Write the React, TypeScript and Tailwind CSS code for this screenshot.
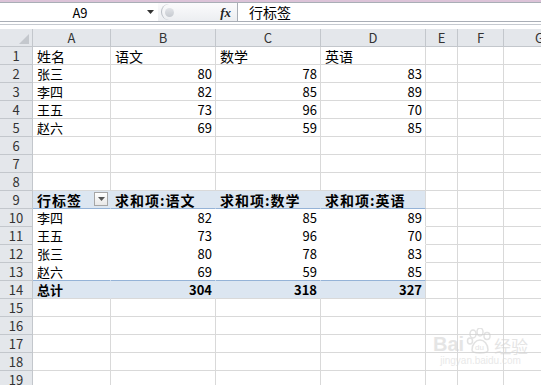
import React from "react";

type Val = string | number | null;

const COLS = ["A", "B", "C", "D", "E", "F", "G"];

const ROWS: Val[][] = [
  ["姓名", "语文", "数学", "英语"],
  ["张三", 80, 78, 83],
  ["李四", 82, 85, 89],
  ["王五", 73, 96, 70],
  ["赵六", 69, 59, 85],
  [],
  [],
  [],
  ["行标签", "求和项:语文", "求和项:数学", "求和项:英语"],
  ["李四", 82, 85, 89],
  ["王五", 73, 96, 70],
  ["张三", 80, 78, 83],
  ["赵六", 69, 59, 85],
  ["总计", 304, 318, 327],
  [],
  [],
  [],
  [],
  [],
];

const FONT = "font-['Noto_Sans_CJK_SC','Liberation_Sans',sans-serif]";

const DropButton = () => (
  <span className="absolute right-[2px] top-[1px] flex h-[14px] w-[14px] items-center justify-center border border-[#a6a6a6] bg-gradient-to-b from-white to-[#e8e8e8]">
    <svg width="7" height="4" viewBox="0 0 7 4">
      <path d="M0 0h7L3.5 4z" fill="#555" />
    </svg>
  </span>
);

const App = () => {
  return (
    <div className={`relative w-[541px] h-[385px] overflow-hidden bg-white text-[13px] text-black ${FONT}`}>
      {/* ribbon edge */}
      <div className="h-[2px] bg-[#dcc3d8]" />

      {/* formula bar */}
      <div className="flex h-[20px] border-y border-[#a9aeb6] bg-white">
        <div className="relative flex w-[158px] items-center justify-center">
          <span className="pl-[2px] text-[13px] leading-none">A9</span>
          <svg className="absolute right-[4px] top-[7px]" width="7" height="4" viewBox="0 0 7 4">
            <path d="M0 0h7L3.5 4z" fill="#333" />
          </svg>
        </div>
        <div className="flex w-[80px] items-center border-r border-[#a9aeb6] bg-gradient-to-b from-[#fbfbfc] to-[#eceef1]">
          <span className="ml-[3px] h-[16px] w-[14px] rounded-l-full border-l border-[#b8bdc4]" />
          <span className="-ml-[10px] h-[9px] w-[9px] rounded-full bg-gradient-to-b from-[#e2e4e8] to-[#c6cad0]" />
          <span className="ml-auto mr-[6px] font-['Liberation_Serif',serif] text-[13px] font-bold italic leading-none text-[#222]">
            fx
          </span>
        </div>
        <div className="flex items-center pl-[11px] text-[14px] leading-none">行标签</div>
      </div>

      {/* gap under formula bar */}
      <div className="h-[5px] bg-white">
        <div className="mt-[2px] h-px bg-[#c6cad0]" />
      </div>

      {/* sheet */}
      <div className="grid grid-cols-[33px_78px_105px_105px_105px_32px_46px_72px] auto-rows-[18px]">
        <div className="relative border-r border-b border-[#c3c7cc] bg-[#e4e7eb]">
          <svg className="absolute bottom-[2px] right-[3px]" width="10" height="10" viewBox="0 0 10 10">
            <path d="M10 0v10H0z" fill="#c4c8cd" />
          </svg>
        </div>
        {COLS.map((c) => (
          <div
            key={c}
            className="flex items-center justify-center border-r border-b border-[#c3c7cc] bg-[#e4e7eb] text-[13px] text-[#333]"
          >
            {c}
          </div>
        ))}

        {ROWS.map((row, i) => {
          const r = i + 1;
          const pivotHead = r === 9;
          const pivotBody = r >= 10 && r <= 13;
          const pivotTotal = r === 14;
          return (
            <React.Fragment key={r}>
              <div className="flex items-center justify-center border-r border-b border-[#c3c7cc] bg-[#e4e7eb] text-[13px] text-[#333]">
                {r}
              </div>
              {COLS.map((c, ci) => {
                const v = ci < 4 ? row[ci] ?? null : null;
                const inPivot = ci < 4 && (pivotHead || pivotBody || pivotTotal);
                const isNum = typeof v === "number";
                let cls = "border-r border-b border-[#d9d9d9]";
                if (inPivot) {
                  const right = ci === 3 ? "border-r-[#d9d9d9]" : pivotBody ? "border-r-white" : "border-r-[#dce6f1]";
                  const bottom =
                    pivotHead || r === 13 ? "border-b-[#95b3d7]" : pivotBody ? "border-b-white" : "border-b-[#d9d9d9]";
                  const bg = pivotHead || pivotTotal ? "bg-[#dce6f1]" : "bg-white";
                  cls = `border-r border-b ${right} ${bottom} ${bg}`;
                }
                const bold = pivotHead || pivotTotal;
                return (
                  <div
                    key={c}
                    className={`relative flex items-center overflow-visible whitespace-nowrap px-[4px] leading-none ${cls} ${
                      isNum ? "justify-end pr-[3px]" : "justify-start"
                    } ${bold ? "font-bold" : ""} ${pivotHead ? "text-[14px] tracking-[1px]" : ""} ${
                      r === 1 ? "text-[14px]" : ""
                    }`}
                  >
                    {v}
                    {pivotHead && ci === 0 && <DropButton />}
                  </div>
                );
              })}
            </React.Fragment>
          );
        })}
      </div>

      {/* watermark */}
      <div className="pointer-events-none absolute left-[433px] top-[328px] flex flex-col items-center opacity-60">
        <div className="flex items-end gap-[2px] font-['Liberation_Sans',sans-serif] text-[#d4d4d4]">
          <span className="text-[20px] font-bold leading-none">Bai</span>
          <svg width="26" height="26" viewBox="0 0 26 26">
            <g fill="none" stroke="#d0d0d0" strokeWidth="1.5">
              <ellipse cx="7" cy="6" rx="3" ry="4" />
              <ellipse cx="14" cy="4" rx="3" ry="4" />
              <ellipse cx="21" cy="8" rx="3" ry="3.5" />
              <ellipse cx="4" cy="13" rx="2.5" ry="3" />
              <path d="M6 22c0-6 4-10 8-10s8 4 8 10c0 2-3 3-8 3s-8-1-8-3z" />
            </g>
            <text x="9" y="22" fontSize="8" fill="#d0d0d0" fontFamily="Liberation Sans">du</text>
          </svg>
          <span className="text-[17px] leading-none font-['Noto_Sans_CJK_SC',sans-serif]">经验</span>
        </div>
        <span className="mt-[2px] font-['Liberation_Sans',sans-serif] text-[10px] leading-none text-[#dadada]">
          jingyan.baidu.com
        </span>
      </div>
    </div>
  );
};

export default App;
